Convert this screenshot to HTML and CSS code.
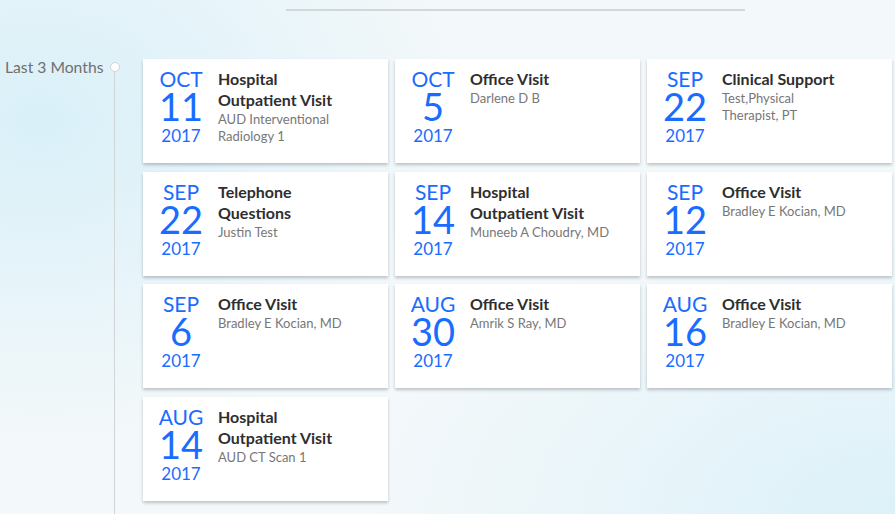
FILE: index.html
```html
<!doctype html>
<html lang="en">
    <head>
        <meta charset="utf-8">
        <meta name="viewport" content="width=device-width, initial-scale=1.0"/>
        <title>Visits timeline</title>
        <link rel="stylesheet" href="styles.css">
    </head>
    <body>
        <div class="topbar"><div class="rule"></div></div>

        <section class="timeline">
            <div class="period">
                <span class="label">Last 3 Months</span>
                <span class="dot"></span>
            </div>

            <div class="visits">
                <div class="card">
                    <div class="date"><span class="mon">OCT</span><span class="day">11</span><span class="yr">2017</span></div>
                    <div class="info"><div class="title">Hospital Outpatient Visit</div><div class="sub">AUD Interventional Radiology 1</div></div>
                </div>
                <div class="card">
                    <div class="date"><span class="mon">OCT</span><span class="day">5</span><span class="yr">2017</span></div>
                    <div class="info"><div class="title">Office Visit</div><div class="sub">Darlene D B</div></div>
                </div>
                <div class="card">
                    <div class="date"><span class="mon">SEP</span><span class="day">22</span><span class="yr">2017</span></div>
                    <div class="info"><div class="title">Clinical Support</div><div class="sub">Test,Physical<br>Therapist, PT</div></div>
                </div>

                <div class="card">
                    <div class="date"><span class="mon">SEP</span><span class="day">22</span><span class="yr">2017</span></div>
                    <div class="info"><div class="title">Telephone Questions</div><div class="sub">Justin Test</div></div>
                </div>
                <div class="card">
                    <div class="date"><span class="mon">SEP</span><span class="day">14</span><span class="yr">2017</span></div>
                    <div class="info"><div class="title">Hospital Outpatient Visit</div><div class="sub">Muneeb A Choudry, MD</div></div>
                </div>
                <div class="card">
                    <div class="date"><span class="mon">SEP</span><span class="day">12</span><span class="yr">2017</span></div>
                    <div class="info"><div class="title">Office Visit</div><div class="sub">Bradley E Kocian, MD</div></div>
                </div>

                <div class="card">
                    <div class="date"><span class="mon">SEP</span><span class="day">6</span><span class="yr">2017</span></div>
                    <div class="info"><div class="title">Office Visit</div><div class="sub">Bradley E Kocian, MD</div></div>
                </div>
                <div class="card">
                    <div class="date"><span class="mon">AUG</span><span class="day">30</span><span class="yr">2017</span></div>
                    <div class="info"><div class="title">Office Visit</div><div class="sub">Amrik S Ray, MD</div></div>
                </div>
                <div class="card">
                    <div class="date"><span class="mon">AUG</span><span class="day">16</span><span class="yr">2017</span></div>
                    <div class="info"><div class="title">Office Visit</div><div class="sub">Bradley E Kocian, MD</div></div>
                </div>

                <div class="card">
                    <div class="date"><span class="mon">AUG</span><span class="day">14</span><span class="yr">2017</span></div>
                    <div class="info"><div class="title">Hospital Outpatient Visit</div><div class="sub">AUD CT Scan 1</div></div>
                </div>
            </div>
        </section>
    </body>
</html>
```

FILE: styles.css
```css
/*----- Reset -----*/

*{
	box-sizing: border-box;
}

html, body{
	height: 100%;
	padding: 0;
	margin: 0;
	-webkit-font-smoothing: antialiased;
	font-family: Lato, "Noto Sans", sans-serif;
	font-size: 15px;
	overflow: hidden;
}

body{
	background:
		radial-gradient(ellipse 420px 320px at 40px 120px, rgba(214,239,248,0.9), rgba(214,239,248,0) 100%),
		radial-gradient(ellipse 520px 300px at 895px 514px, rgba(220,241,249,1), rgba(220,241,249,0) 100%),
		#f3f8fa;
}

/*----- top rule -----*/

.topbar{
	height: 59px;
	padding-top: 9px;
}

.rule{
	margin-left: 286px;
	width: 459px;
	height: 2px;
	background-color: #d4d6d8;
}

/*----- timeline -----*/

.timeline{
	display: flex;
	height: calc(100% - 59px);
}

.period{
	position: relative;
	width: 143px;
	flex: none;
}

.period::after{
	content: "";
	position: absolute;
	left: 114px;
	top: 12px;
	bottom: 0;
	width: 1px;
	background-color: #d2d4d6;
}

.label{
	position: absolute;
	left: 5px;
	top: -1px;
	color: #707070;
	line-height: 18px;
	font-size: 15.7px;
}

.dot{
	position: absolute;
	left: 110px;
	top: 3px;
	width: 10px;
	height: 10px;
	border-radius: 50%;
	border: 1px solid #d2d4d6;
	background-color: #fff;
	z-index: 1;
}

/*----- cards -----*/

.visits{
	display: grid;
	grid-template-columns: repeat(3, 245px);
	grid-auto-rows: 104px;
	column-gap: 7px;
	row-gap: 8.7px;
	align-content: start;
}

.card{
	display: flex;
	gap: 9px;
	padding: 9px 10px 0 10px;
	background-color: #fff;
	box-shadow: 0 2px 3px rgba(0,0,0,0.22);
}

.date{
	display: flex;
	flex-direction: column;
	align-items: center;
	width: 56px;
	flex: none;
	color: #1a6cff;
}

.mon{
	font-size: 21px;
	line-height: 22px;
}

.day{
	font-size: 38px;
	line-height: 33px;
}

.yr{
	font-size: 17px;
	line-height: 25px;
}

.info{
	width: 142px;
}

.title{
	max-width: 130px;
	font-weight: bold;
	color: #2e2e2e;
	font-size: 16px;
	line-height: 21px;
}

.sub{
	margin-top: 1px;
	color: #777;
	font-size: 13px;
	line-height: 17px;
}
```
